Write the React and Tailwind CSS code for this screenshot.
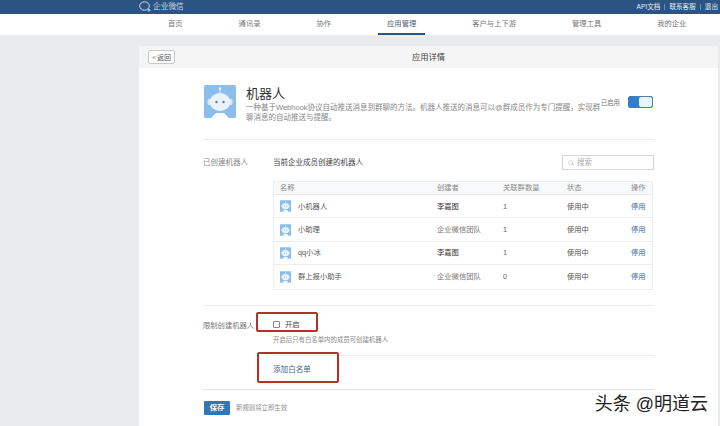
import { Search } from 'lucide-react'

const FONT = '[font-family:"Liberation_Sans","Noto_Sans_CJK_SC",sans-serif]'

const navItems = ['首页', '通讯录', '协作', '应用管理', '客户与上下游', '管理工具', '我的企业']

const robots = [
  { name: '小机器人', owner: '李嘉图', groups: 1, strong: true },
  { name: '小助理', owner: '企业微信团队', groups: 1 },
  { name: 'qq小冰', owner: '李嘉图', groups: 1, strong: true },
  { name: '群上报小助手', owner: '企业微信团队', groups: 0 },
]

const RobotIcon = ({ className }) => (
  <svg viewBox="0 0 32 33" className={className}>
    <rect width="32" height="33" rx="1.5" fill="#8dbdec" />
    <path d="M7 33 L12 28 H20 L25 33 Z" fill="#ffffff" />
    <circle cx="16" cy="3.5" r="1.3" fill="#e8f2fb" />
    <rect x="15.5" y="4" width="1" height="4" fill="#e8f2fb" />
    <rect x="3.5" y="14" width="3" height="6" rx="1.2" fill="#d3e5f7" />
    <rect x="25.5" y="14" width="3" height="6" rx="1.2" fill="#d3e5f7" />
    <ellipse cx="16" cy="17" rx="10.5" ry="9" fill="#eaf3fb" />
    <circle cx="12.5" cy="17" r="1.2" fill="#5f7f9f" />
    <circle cx="19.5" cy="17" r="1.2" fill="#5f7f9f" />
  </svg>
)

const RedBox = ({ className }) => (
  <div className={`absolute border-[2px] border-[#b5302c] rounded-[2px] ${className}`} />
)

export default function App() {
  return (
    <div className={`relative w-[720px] h-[426px] overflow-hidden bg-[#e9ebed] text-[7.3px] leading-none text-[#666] ${FONT}`}>
      {/* Top bar */}
      <div className="h-[14px] bg-[#2c5481] flex items-center text-white">
        <div className="ml-[139px] flex items-center gap-[2px] -mt-[1px]">
          <svg viewBox="0 0 12 11" className="w-[12px] h-[11px]" fill="none" stroke="#dbe6f1" strokeWidth="0.9">
            <ellipse cx="5.5" cy="5" rx="4.8" ry="4.2" />
            <circle cx="10" cy="9.2" r="1" />
          </svg>
          <span className="text-[7.7px] text-[#c9d6e4]">企业微信</span>
        </div>
        <div className="ml-auto mr-[2px] flex items-center gap-[4px] text-[6.6px] text-[#e6edf4]">
          <span>API文档</span>
          <span className="w-px h-[6px] bg-[#6f8cab]" />
          <span>联系客服</span>
          <span className="w-px h-[6px] bg-[#6f8cab]" />
          <span>退出</span>
        </div>
      </div>

      {/* Nav */}
      <div className="h-[21px] bg-white flex pl-[159px] gap-[38px] text-[#777]">
        {navItems.map((item) => (
          <div
            key={item}
            className={`px-[9px] flex items-center border-b-[2px] ${item === '应用管理' ? 'border-[#2c5481] text-[#4d6074]' : 'border-transparent'}`}
          >
            {item}
          </div>
        ))}
      </div>

      {/* Card */}
      <div className="ml-[139px] mr-[2px] mt-[11px] h-[400px] bg-white">
        <div className="relative h-[22px] bg-[#f5f5f6] flex items-center justify-center">
          <div className="absolute left-[9px] top-[4px] h-[14px] w-[27px] flex items-center justify-center gap-[1px] bg-white border border-[#c8c8c8] rounded-[2px] text-[#555] text-[7px]">
            <span className="text-[#999]">«</span>返回
          </div>
          <span className="text-[8.3px] text-[#444]">应用详情</span>
        </div>

        <div className="ml-[64px] w-[451px]">
          {/* App intro */}
          <div className="flex h-[72px] border-b border-[#ececec] pt-[17px] pl-[1px]">
            <RobotIcon className="w-[32px] h-[33px] shrink-0" />
            <div className="ml-[10px] w-[352px]">
              <div className="text-[13px] text-[#333] mt-[2px]">机器人</div>
              <p className="mt-[3px] text-[7.5px] leading-[10px] text-[#888] whitespace-nowrap">
                一种基于Webhook协议自动推送消息到群聊的方法。机器人推送的消息可以@群成员作为专门提醒，实现群
                <br />
                聊消息的自动推送与提醒。
              </p>
            </div>
            <div className="ml-[3px] mt-[11px] flex items-start whitespace-nowrap">
              <span className="mt-[4px] text-[6.3px] text-[#777]">已启用</span>
              <div className="ml-[8px] w-[25px] h-[12px] flex rounded-[2px] bg-[#2f7fd1] border border-[#4d7fae] justify-end">
                <div className="w-[13px] h-full rounded-[2px] bg-[#eaf3fb]" />
              </div>
            </div>
          </div>

          {/* Created robots */}
          <div className="h-[166px] border-b border-[#ececec] pt-[15px]">
            <div className="flex items-center h-[15px] text-[7.5px]">
              <span className="w-[70px] text-[#888]">已创建机器人</span>
              <span className="text-[#444]">当前企业成员创建的机器人</span>
              <div className="ml-auto w-[92px] h-[15px] border border-[#d5d5d5] flex items-center pl-[5px] gap-[3px] text-[#aaa]">
                <Search className="w-[6px] h-[6px]" strokeWidth={2} />
                搜索
              </div>
            </div>

            <div className="ml-[70px] mt-[11px] w-[380px] border border-[#eceff2]">
              <div className="grid grid-cols-[163px_66px_64px_64px_1fr] h-[13px] items-center bg-[#f7f9fa] border-b border-[#e8e8e8] text-[#888]">
                <span className="pl-[6px]">名称</span>
                <span>创建者</span>
                <span>关联群数量</span>
                <span>状态</span>
                <span>操作</span>
              </div>
              {robots.map((robot) => (
                <div
                  key={robot.name}
                  className="grid grid-cols-[163px_66px_64px_64px_1fr] h-[23.4px] items-center border-b border-[#eeeeee] last:border-b-0"
                >
                  <div className="pl-[6px] flex items-center gap-[7px] text-[#555]">
                    <RobotIcon className="w-[11px] h-[12px]" />
                    {robot.name}
                  </div>
                  <span className={robot.strong ? 'text-[#333]' : 'text-[#777]'}>{robot.owner}</span>
                  <span className="text-[#666]">{robot.groups}</span>
                  <span className="text-[#555]">使用中</span>
                  <span className="text-[#3a6ea5]">停用</span>
                </div>
              ))}
            </div>
          </div>

          {/* Restriction */}
          <div className="border-b border-[#e4e4e4] h-[84px]">
            <div className="flex pt-[15px]">
              <span className="w-[70px] text-[#777] mt-[1px]">限制创建机器人</span>
              <div className="flex-1">
                <div className="flex items-center gap-[5px] text-[#444]">
                  <span className="w-[7px] h-[7px] border border-[#888] rounded-[1px] bg-white" />
                  开启
                </div>
                <div className="mt-[9px] text-[6.4px] text-[#888]">开启后只有白名单内的成员可创建机器人</div>
                <div className="mt-[11px] border-t border-[#ececec] pt-[10px] text-[7.6px] text-[#3f6484]">添加白名单</div>
              </div>
            </div>
          </div>

          {/* Save */}
          <div className="flex items-center gap-[6px] mt-[11px] ml-[1px]">
            <div className="w-[26px] h-[14px] rounded-[1px] bg-[#2e78b8] text-white font-bold flex items-center justify-center">保存</div>
            <span className="text-[#888] text-[6.4px]">新规则将立即生效</span>
          </div>
        </div>
      </div>

      {/* Red annotations */}
      <RedBox className="left-[256px] top-[312px] w-[62px] h-[20px]" />
      <RedBox className="left-[257px] top-[352px] w-[82px] h-[31px]" />

      {/* Watermark */}
      <div className="absolute right-[12px] top-[395px] text-[18px] text-[#222] [text-shadow:0_0_2px_#fff]">头条 @明道云</div>
    </div>
  )
}
